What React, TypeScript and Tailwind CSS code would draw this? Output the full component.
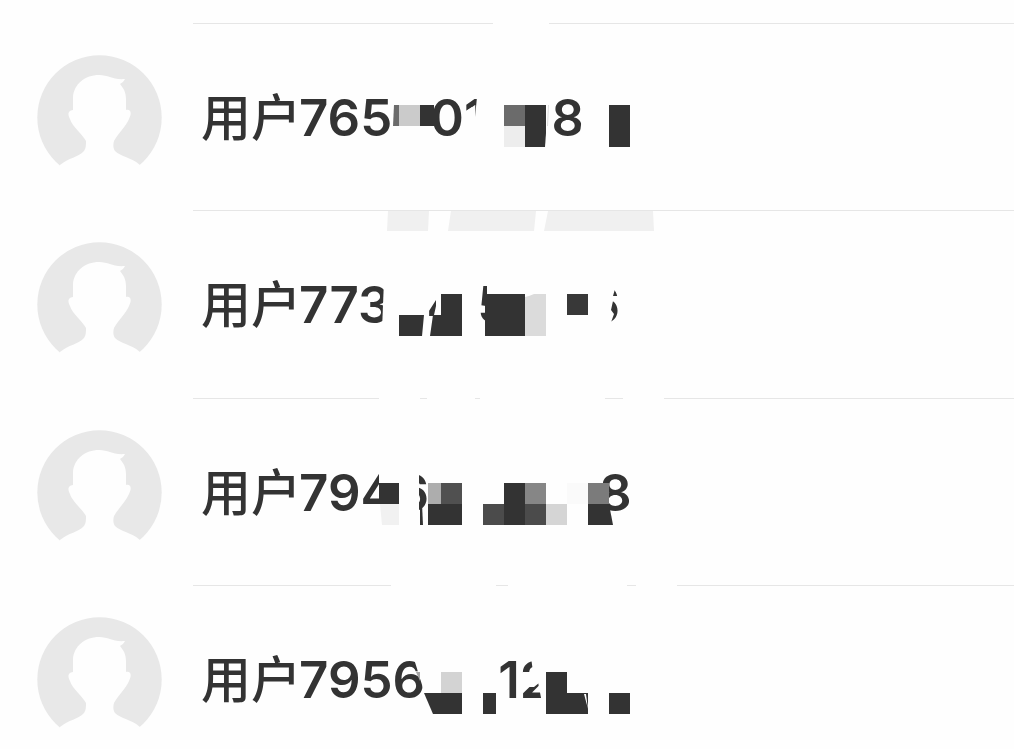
import React from 'react';

type Piece = { text: string; gap: string };
type Tile = { points: string; fill: string };

interface UserRow {
  height: string;
  // visible stretches of the divider above the row: [start, end], end null = to the edge
  divider: [number, number | null][];
  pieces: Piece[];
  tiles: Tile[];
}

const BG = '#fefefe';
const INK = '#333333';

const users: UserRow[] = [
  {
    height: 'h-[187px]',
    divider: [[0, 300], [356, null]],
    pieces: [
      { text: '765', gap: '' },
      { text: '01', gap: 'ml-[38px]' },
      { text: '8', gap: 'ml-[66px]' },
    ],
    tiles: [
      { points: '271,89 279,84 279,94 282,94 284,74 292,74 292,118 271,118', fill: BG },
      { points: '201,82 206,82 206,103 200,103', fill: '#6b6b6b' },
      { points: '206,82 227,82 227,103 206,103', fill: '#cbcbcb' },
      { points: '227,82 241,82 241,103 227,103', fill: INK },
      { points: '311,82 332,82 332,103 311,103', fill: '#6b6b6b' },
      { points: '311,103 332,103 332,124 311,124', fill: '#ededed' },
      { points: '332,82 353,82 353,110 352,124 332,124', fill: INK },
      { points: '355,82 356,82 355,103 354,103', fill: '#dddddd' },
      { points: '389,94 386,118 396,118 396,94', fill: BG },
      { points: '416,82 437,82 437,124 416,124', fill: INK },
    ],
  },
  {
    height: 'h-[188px]',
    divider: [[0, null]],
    pieces: [
      { text: '773', gap: '' },
      { text: '4', gap: 'ml-[36px]' },
      { text: '5', gap: 'ml-[17px]' },
      { text: '6', gap: 'ml-[78px]' },
    ],
    tiles: [
      { points: '195,1 236,1 235,21 194,21', fill: '#f0f0f0' },
      { points: '258,1 343,1 341,21 255,21', fill: '#f0f0f0' },
      { points: '355,1 460,1 461,21 351,21', fill: '#f0f0f0' },
      { points: '191,70 200,70 200,120 189,120', fill: BG },
      { points: '243,70 287,70 287,126 237,126 241,105 243,96', fill: BG },
      { points: '294,70 334,70 334,116 294,116', fill: BG },
      { points: '206,105 231,105 229,126 206,126', fill: INK },
      { points: '248,84 269,84 269,126 237,126 240,105 248,105', fill: INK },
      { points: '292,84 332,84 332,126 292,126', fill: INK },
      { points: '332,87 336,86 341,84 353,84 353,126 332,126', fill: '#dbdbdb' },
      { points: '374,84 395,84 395,105 374,105', fill: '#383838' },
      { points: '396,118 396,70 424,70 422,79 420,86 426,86 426,91 420,91 418,100 421,104 416,118', fill: BG },
    ],
  },
  {
    height: 'h-[187px]',
    divider: [[0, 186], [227, 234], [282, 287], [412, 430], [471, null]],
    pieces: [
      { text: '794', gap: '' },
      { text: '6', gap: 'ml-[2px]' },
      { text: '8', gap: 'ml-[170px]' },
    ],
    tiles: [
      { points: '186,70 226,70 226,118 186,118', fill: BG },
      { points: '186,85 206,85 206,106 186,106', fill: INK },
      { points: '187,106 206,106 206,127 189,127', fill: '#f1f1f1' },
      { points: '235,85 248,85 248,106 235,106', fill: '#adadad' },
      { points: '248,85 269,85 269,106 248,106', fill: '#505050' },
      { points: '235,106 269,106 269,127 235,127', fill: INK },
      { points: '227,106 229,106 230,127 227,127', fill: INK },
      { points: '290,106 311,106 311,127 290,127', fill: '#4b4b4b' },
      { points: '311,85 332,85 332,127 311,127', fill: INK },
      { points: '332,85 353,85 353,106 332,106', fill: '#868686' },
      { points: '332,106 353,106 353,127 332,127', fill: '#4b4b4b' },
      { points: '353,106 374,106 374,127 353,127', fill: '#d5d5d5' },
      { points: '374,85 395,85 395,106 374,106', fill: '#fafafa' },
      { points: '395,85 416,85 416,106 395,106', fill: '#7b7b7b' },
      { points: '395,106 416,106 420,127 395,127', fill: INK },
    ],
  },
  {
    height: 'h-[188px]',
    divider: [[0, 198], [303, 315], [434, 443], [484, null]],
    pieces: [
      { text: '7956', gap: '' },
      { text: '12', gap: 'ml-[73px]' },
    ],
    tiles: [
      { points: '221,74 240,74 240,116 234,116', fill: BG },
      { points: '223,87 227,87 227,96', fill: '#a5a5a5' },
      { points: '231,108 269,108 269,129 240,129', fill: INK },
      { points: '248,87 269,87 269,108 248,108', fill: '#d3d3d3' },
      { points: '290,108 303,108 303,129 290,129', fill: INK },
      { points: '330,87 346,87 346,98 341,102 330,102', fill: BG },
      { points: '338,72 364,72 364,118 349,118 345,97 340,87', fill: BG },
      { points: '353,87 374,87 374,108 395,108 395,129 353,129', fill: INK },
      { points: '391,109 393,109 395,124', fill: BG },
      { points: '416,108 437,108 437,129 416,129', fill: INK },
    ],
  },
];

function Avatar() {
  return (
    <svg viewBox="0 0 125 125" className="mt-8 h-[125px] w-[125px] shrink-0" role="img" aria-label="默认头像">
      <circle cx="62.5" cy="62.5" r="62.2" fill="#e8e8e8" />
      <path
        fill="#fefefe"
        d="M23 110 C31 103 42 102 47 96 C49 93 49 90 49 86 C45 79 35 71 33 64 C31 60 30 56 36 55 V42 C37 29 48 20 62 20 C72 20 75 25 88 24 C87 26 85 28 83 29 C88 35 89 39 89 45 V55 C94 54 95 58 92 64 C89 71 81 79 77 86 C76 90 76 93 78 96 C84 102 94 102 103 110 V126 H23 Z"
      />
    </svg>
  );
}

function Divider({ parts }: { parts: UserRow['divider'] }) {
  return (
    <div className="flex h-px w-full">
      {parts.map(([start, end], i) => {
        const prev = i === 0 ? 0 : parts[i - 1][1] ?? 0;
        return (
          <div
            key={i}
            className={`h-px bg-[#e6e6e6] ${end === null ? 'flex-1' : 'shrink-0'}`}
            style={{ marginLeft: start - prev, width: end === null ? undefined : end - start }}
          />
        );
      })}
    </div>
  );
}

function Row({ user }: { user: UserRow }) {
  return (
    <li className={`flex shrink-0 ${user.height}`}>
      <div className="flex w-[193px] shrink-0 pl-[37px]">
        <Avatar />
      </div>
      <div className="relative min-w-0 flex-1">
        <Divider parts={user.divider} />
        <div className="flex items-baseline pl-2 pt-16 text-[51px] leading-[60px] font-semibold whitespace-nowrap text-[#333333]">
          <span className="w-[98px] text-[50px] font-medium">用户</span>
          {user.pieces.map((piece, i) => (
            <span key={i} className={piece.gap}>{piece.text}</span>
          ))}
        </div>
        {/* Mosaic over the account number */}
        <svg viewBox="0 0 480 187" className="absolute top-0 left-0 h-[187px] w-[480px]" aria-hidden="true">
          {user.tiles.map((tile, i) => (
            <polygon key={i} points={tile.points} fill={tile.fill} />
          ))}
        </svg>
      </div>
    </li>
  );
}

export default function App() {
  return (
    <main className="h-screen overflow-hidden bg-[#fefefe] pt-[23px] font-[Inter,'Noto_Sans_CJK_SC',sans-serif]">
      <ul className="flex flex-col">
        {users.map((user, i) => (
          <Row key={i} user={user} />
        ))}
      </ul>
    </main>
  );
}
